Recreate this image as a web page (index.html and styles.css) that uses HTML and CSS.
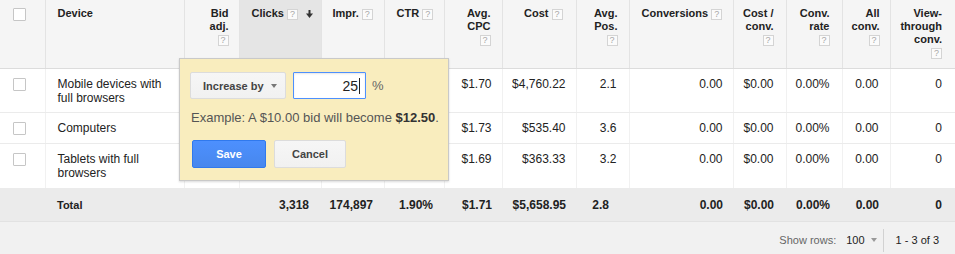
FILE: index.html
```html
<!DOCTYPE html>
<html>
<head>
<meta charset="utf-8">
<link rel="stylesheet" href="styles.css">
</head>
<body>
<div class="report">
  <table class="grid">
    <colgroup>
      <col style="width:45px"><col style="width:139px"><col style="width:55px"><col style="width:82px">
      <col style="width:63px"><col style="width:60px"><col style="width:58px"><col style="width:74px">
      <col style="width:53px"><col style="width:104px"><col style="width:53px"><col style="width:56px">
      <col style="width:48px"><col style="width:65px">
    </colgroup>
    <thead>
      <tr>
        <th><span class="cb"></span></th>
        <th>Device</th>
        <th>Bid<br>adj.<br><span class="help">?</span></th>
        <th class="sorted">Clicks <span class="help">?</span><svg class="sort" width="7" height="8" viewBox="0 0 7 8"><rect x="2.5" y="0" width="2" height="4.5" fill="#333"/><polygon points="0,3.5 7,3.5 3.5,8" fill="#333"/></svg></th>
        <th>Impr. <span class="help">?</span></th>
        <th>CTR <span class="help">?</span></th>
        <th>Avg.<br>CPC<br><span class="help">?</span></th>
        <th>Cost <span class="help">?</span></th>
        <th>Avg.<br>Pos.<br><span class="help">?</span></th>
        <th>Conversions <span class="help">?</span></th>
        <th>Cost /<br>conv.<br><span class="help">?</span></th>
        <th>Conv.<br>rate<br><span class="help">?</span></th>
        <th>All<br>conv.<br><span class="help">?</span></th>
        <th>View-<br>through<br>conv.<br><span class="help">?</span></th>
      </tr>
    </thead>
    <tbody>
      <tr>
        <td><span class="cb"></span></td>
        <td>Mobile devices with full browsers</td>
        <td></td><td></td><td></td><td></td>
        <td>$1.70</td><td>$4,760.22</td><td>2.1</td><td>0.00</td><td>$0.00</td><td>0.00%</td><td>0.00</td><td>0</td>
      </tr>
      <tr>
        <td><span class="cb"></span></td>
        <td>Computers</td>
        <td></td><td></td><td></td><td></td>
        <td>$1.73</td><td>$535.40</td><td>3.6</td><td>0.00</td><td>$0.00</td><td>0.00%</td><td>0.00</td><td>0</td>
      </tr>
      <tr>
        <td><span class="cb"></span></td>
        <td>Tablets with full browsers</td>
        <td></td><td></td><td></td><td></td>
        <td>$1.69</td><td>$363.33</td><td>3.2</td><td>0.00</td><td>$0.00</td><td>0.00%</td><td>0.00</td><td>0</td>
      </tr>
    </tbody>
    <tfoot>
      <tr class="total">
        <td></td>
        <td class="total-label">Total</td>
        <td></td><td>3,318</td><td>174,897</td><td>1.90%</td>
        <td>$1.71</td><td>$5,658.95</td><td>2.8</td><td>0.00</td><td>$0.00</td><td>0.00%</td><td>0.00</td><td>0</td>
      </tr>
    </tfoot>
  </table>

  <div class="pager">
    <span class="pager-label">Show rows:</span>
    <span class="pager-select">100 <span class="caret"></span></span>
    <span class="pager-sep"></span>
    <span class="pager-range">1 - 3 of 3</span>
  </div>

  <div class="bid-popup">
    <div class="bid-row">
      <div class="select-btn">Increase by <span class="caret dark"></span></div>
      <div class="num-input"><span>25</span><span class="cursor"></span></div>
      <span class="pct">%</span>
    </div>
    <div class="example">Example: A $10.00 bid will become <b>$12.50</b>.</div>
    <div class="actions">
      <button class="btn primary">Save</button>
      <button class="btn">Cancel</button>
    </div>
  </div>
</div>
</body>
</html>
```

FILE: styles.css
```css
html, body {
  margin: 0;
  padding: 0;
  background: #f1f1f1;
}
body {
  font-family: "Liberation Sans", Arial, sans-serif;
  color: #222;
  width: 955px;
  height: 254px;
  overflow: hidden;
}
.report {
  position: relative;
  width: 955px;
  background: #fff;
}
.grid {
  width: 955px;
  table-layout: fixed;
  border-collapse: collapse;
  border-spacing: 0;
}

/* header */
.grid th {
  background: #f5f5f5;
  font-size: 11px;
  font-weight: bold;
  line-height: 13px;
  height: 54px;
  padding: 7px 11px 7px 4px;
  vertical-align: top;
  text-align: right;
  border-right: 1px solid #e3e3e3;
  border-bottom: 1px solid #dcdcdc;
  white-space: nowrap;
}
.grid th:last-child { border-right: 0; }
.grid th:nth-child(1) { text-align: left; padding: 8px 0 0 13px; }
.grid th:nth-child(2) { text-align: left; padding-left: 12px; }
.grid th:nth-child(3) { padding-right: 10px; }
.grid th:nth-child(4) { text-align: left; padding-left: 12px; padding-right: 4px; }
.grid th:nth-child(5) { text-align: left; padding-left: 11px; }
.grid th:nth-child(6) { text-align: left; padding-left: 12px; }
.grid th:nth-child(8) { padding-right: 13px; }
.grid th:nth-child(10) { text-align: left; padding-left: 12px; }
.grid th:nth-child(11),
.grid th:nth-child(12) { padding-right: 12px; }
.grid th:nth-child(13) { padding-right: 10px; }
.grid th:nth-child(14) { padding-right: 13px; }
.grid th.sorted { background: #e5e5e5; }

.help {
  display: inline-block;
  box-sizing: border-box;
  width: 11px;
  height: 11px;
  margin-top: 2px;
  vertical-align: top;
  border: 1px solid #d4d4d4;
  background: #fbfbfb;
  color: #a8a8a8;
  font-size: 9px;
  line-height: 9px;
  font-weight: normal;
  text-align: center;
}
.sort {
  display: inline-block;
  vertical-align: top;
  margin: 3px 0 0 8px;
}

.cb {
  display: block;
  box-sizing: border-box;
  width: 13px;
  height: 13px;
  background: #fff;
  border: 1px solid #c6c6c6;
  border-radius: 1px;
}

/* body */
.grid td {
  font-size: 12px;
  line-height: 14px;
  padding: 8px 11px 7px 4px;
  vertical-align: top;
  text-align: right;
  border-right: 1px solid #f1f1f1;
  border-bottom: 1px solid #ebebeb;
}
.grid td:last-child { border-right: 0; }
.grid td:nth-child(1) { padding: 9px 0 0 13px; text-align: left; }
.grid td:nth-child(2) { text-align: left; padding-left: 12px; padding-right: 8px; }
.grid td:nth-child(3),
.grid td:nth-child(7),
.grid td:nth-child(8),
.grid td:nth-child(10) { padding-right: 10px; }
.grid td:nth-child(4),
.grid td:nth-child(9),
.grid td:nth-child(11),
.grid td:nth-child(12) { padding-right: 12px; }
.grid td:nth-child(14) { padding-right: 13px; }
.grid tbody tr:nth-child(2) td { padding-bottom: 8px; }
.grid tbody tr:nth-child(3) td { padding-bottom: 8px; }

/* total */
.grid tr.total td {
  background: #ebebeb;
  font-weight: bold;
  padding-top: 9px;
  padding-bottom: 9px;
  border-right: 0;
  border-bottom: 1px solid #e2e2e2;
}
.grid tr.total td.total-label { font-size: 11px; }
.grid tr.total td:nth-child(9) { padding-right: 20px; }

/* pager */
.pager {
  display: flex;
  justify-content: flex-end;
  align-items: center;
  box-sizing: border-box;
  height: 33px;
  padding: 3px 16px 0 0;
  background: #f1f1f1;
  font-size: 11px;
}
.pager-label { color: #666; }
.pager-select {
  color: #222;
  margin-left: 10px;
  display: flex;
  align-items: center;
}
.caret {
  display: inline-block;
  width: 0;
  height: 0;
  border-left: 3.5px solid transparent;
  border-right: 3.5px solid transparent;
  border-top: 4px solid #999;
  margin-left: 6px;
}
.caret.dark { border-top-color: #777; margin-left: 7px; }
.pager-sep {
  width: 1px;
  height: 23px;
  background: #d2d2d2;
  margin: 0 12px 0 6px;
}
.pager-range { color: #222; }

/* popup */
.bid-popup {
  position: absolute;
  left: 179px;
  top: 58px;
  box-sizing: border-box;
  width: 270px;
  height: 123px;
  padding: 13px 10px 0 10px;
  background: #f9edbe;
  border: 1px solid #c9c9c9;
  box-shadow: 0 1px 2px rgba(0,0,0,0.15);
}
.bid-row {
  display: flex;
  align-items: center;
  height: 27px;
}
.select-btn {
  box-sizing: border-box;
  width: 96px;
  height: 27px;
  display: flex;
  align-items: center;
  padding-left: 12px;
  background: linear-gradient(#f6f6f6, #f1f1f1);
  border: 1px solid #dcdcdc;
  border-radius: 2px;
  color: #444;
  font-size: 11px;
  font-weight: bold;
}
.num-input {
  box-sizing: border-box;
  width: 73px;
  height: 27px;
  margin-left: 7px;
  display: flex;
  align-items: center;
  justify-content: flex-end;
  padding-right: 5px;
  background: #fff;
  border: 1px solid #4d90fe;
  border-radius: 1px;
  box-shadow: inset 0 1px 2px rgba(0,0,0,0.1);
  font-size: 14px;
  color: #222;
}
.cursor {
  display: inline-block;
  width: 1px;
  height: 16px;
  background: #222;
  margin-left: 1px;
}
.pct {
  margin-left: 6px;
  font-size: 13px;
  color: #666;
}
.example {
  margin-top: 11px;
  padding-left: 1px;
  font-size: 13px;
  line-height: 16px;
  color: #555;
  white-space: nowrap;
}
.example b { color: #333; }
.actions {
  display: flex;
  gap: 8px;
  margin-top: 14px;
  padding-left: 2px;
}
.btn {
  box-sizing: border-box;
  width: 72px;
  height: 28px;
  font-family: "Liberation Sans", Arial, sans-serif;
  font-size: 11px;
  font-weight: bold;
  color: #444;
  background: linear-gradient(#f6f6f6, #f1f1f1);
  border: 1px solid #dcdcdc;
  border-radius: 2px;
  padding: 0;
}
.btn.primary {
  width: 74px;
  color: #fff;
  background: linear-gradient(#4d90fe, #4787ed);
  border-color: #3079ed;
}
```
